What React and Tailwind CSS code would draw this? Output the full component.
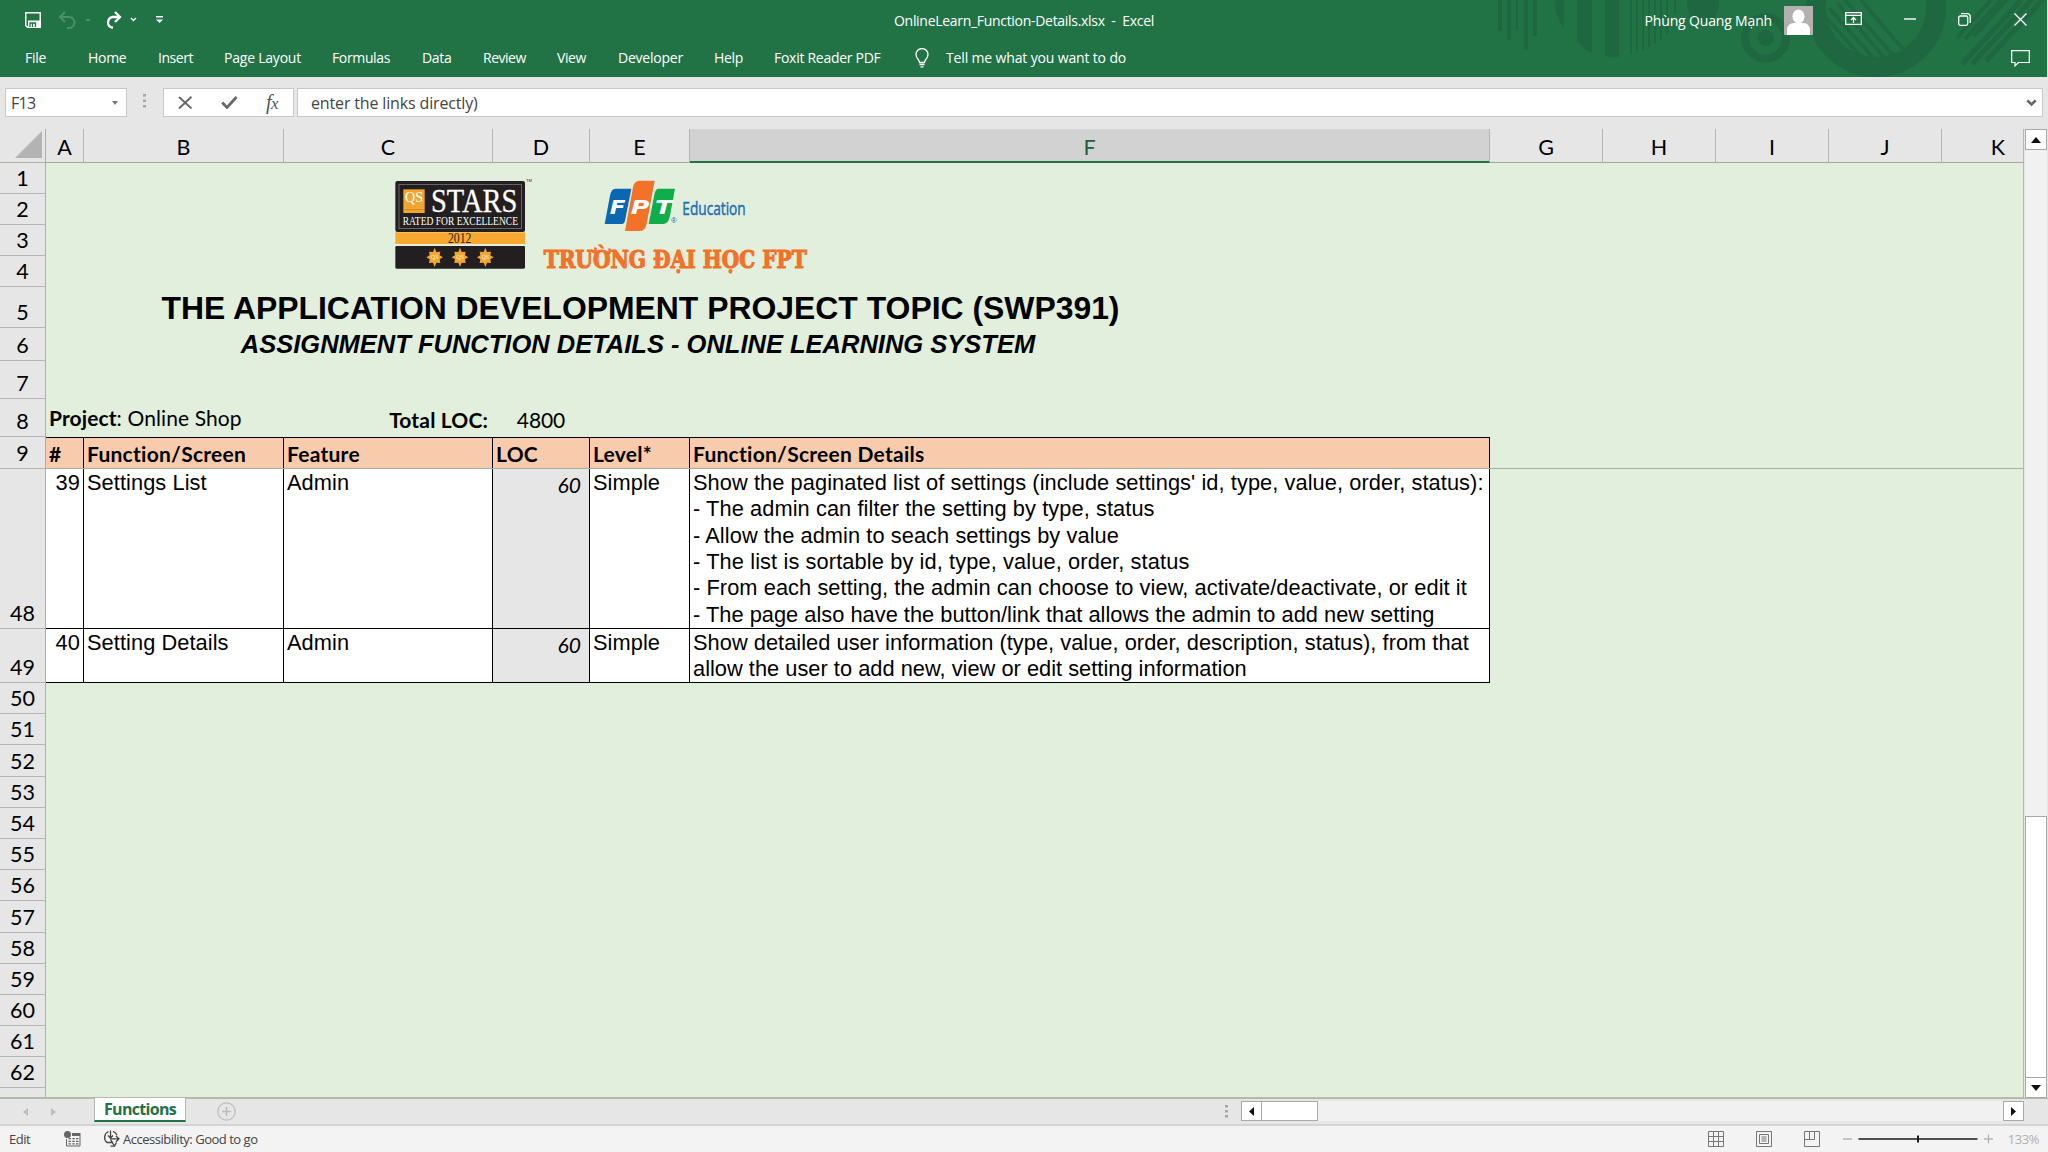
import React from "react";

const UI = "font-['Open_Sans','Noto_Sans',sans-serif]";
const CALIBRI = "font-['Lato','Noto_Sans',sans-serif]";
const ARIAL = "font-['Liberation_Sans',Arial,sans-serif]";

const TABS = [
  ["File", "w-[63px] tracking-[-0.29px]"],
  ["Home", "w-[70px] tracking-[-0.3px]"],
  ["Insert", "w-[66px] tracking-[-0.45px]"],
  ["Page Layout", "w-[108px] tracking-[-0.22px]"],
  ["Formulas", "w-[90px] tracking-[-0.36px]"],
  ["Data", "w-[61px] tracking-[-0.3px]"],
  ["Review", "w-[74px] tracking-[-0.5px]"],
  ["View", "w-[61px] tracking-[-0.4px]"],
  ["Developer", "w-[96px] tracking-[-0.22px]"],
  ["Help", "w-[60px] tracking-[-0.3px]"],
  ["Foxit Reader PDF", "w-[139px] tracking-[-0.28px]"],
];

const COLUMNS = [
  ["A", "w-[38px]"],
  ["B", "w-[200px]"],
  ["C", "w-[209px]"],
  ["D", "w-[97px]"],
  ["E", "w-[100px]"],
  ["F", "w-[800px]"],
  ["G", "w-[113px]"],
  ["H", "w-[113px]"],
  ["I", "w-[113px]"],
  ["J", "w-[113px]"],
];

const ROWS = [
  ["1", "h-[31px]"], ["2", "h-[31px]"], ["3", "h-[31px]"], ["4", "h-[31px]"],
  ["5", "h-[41px]"], ["6", "h-[33px]"], ["7", "h-[38px]"], ["8", "h-[38px]"],
  ["9", "h-[32px]"], ["48", "h-[160px]"], ["49", "h-[54px]"],
];
const LOWER_ROWS = ["50", "51", "52", "53", "54", "55", "56", "57", "58", "59", "60", "61", "62"];

const HEADINGS = [
  ["#", "w-[38px]"],
  ["Function/Screen", "w-[200px]"],
  ["Feature", "w-[209px]"],
  ["LOC", "w-[97px]"],
  ["Level*", "w-[100px]"],
  ["Function/Screen Details", "w-[800px]"],
];

const RECORDS = [
  {
    id: "39", name: "Settings List", height: "h-[160px]",
    lines: [
      ["Show the paginated list of settings (include settings' id, type, value, order, status):", "tracking-[0.07px]"],
      ["- The admin can filter the setting by type, status", "tracking-[0.08px]"],
      ["- Allow the admin to seach settings by value", "tracking-[0.07px]"],
      ["- The list is sortable by id, type, value, order, status", "tracking-[0.11px]"],
      ["- From each setting, the admin can choose to view, activate/deactivate, or edit it", "tracking-[0.07px]"],
      ["- The page also have the button/link that allows the admin to add new setting", "tracking-[0.02px]"],
    ],
  },
  {
    id: "40", name: "Setting Details", height: "h-[54px]",
    lines: [
      ["Show detailed user information (type, value, order, description, status), from that", "tracking-[0.035px]"],
      ["allow the user to add new, view or edit setting information", "tracking-[0.02px]"],
    ],
  },
];

function TitlePattern() {
  return (
    <svg className="absolute right-0 top-0" width="558" height="77" viewBox="1490 0 558 77" fill="#1f6740" stroke="none">
      <path d="M1499 0h4v31h-4zM1508 0h4v40h-4zM1517 0h2v30h-2zM1525 0h4v50h-4zM1534 0h4v36h-4zM1555 0h10v28q-8-10-10-28z" />
      <path d="M1578 0h15v53q-9-4-15-12zM1606 0h14v57q-8 1-14-1z" />
      <path d="M1631 0h2v53h-2zM1637 0h2v53h-2zM1643 0h2v50h-2zM1649 0h2v47h-2zM1655 0h2v43h-2zM1661 0h2v39h-2zM1667 0h2v34h-2zM1675 0h2v14h-2z" />
      <path d="M1688 0h32q0 22-16 22t-16-22z" />
      <circle cx="1766.500" cy="38" r="8" />
      <circle cx="1766.500" cy="38" r="20.500" fill="none" stroke="#1f6740" strokeWidth="8" />
      <circle cx="1877" cy="7" r="60" fill="none" stroke="#1f6740" strokeWidth="20" />
      <g stroke="#1f6740" strokeWidth="3.500">
        <path d="M1824 14L1872 68M1830 8L1884 69M1838 3L1892 65M1846 0L1900 62M1862 0L1908 54" />
        <path d="M1963 64L2022 0M1973 64L2036 -4M1987 61L2046 -3" strokeWidth="5" />
        <path d="M1958 38L1992 0M1966 39L2002 0M1975 36L2010 -3" strokeWidth="4" />
      </g>
    </svg>
  );
}

function TitleBar() {
  return (
    <div className="relative flex h-[40px] items-center text-[14px] leading-[20px] text-white">
      <div className="flex w-[340px] items-center pl-[25px]">
        <svg width="16" height="16" viewBox="0 0 16 16" fill="none" stroke="white" strokeWidth="1.5">
          <path d="M.75.75h14.500v14.500H2.500L.75 13.500z" />
          <path d="M1 8.500h14v7H3v-7z" fill="white" stroke="none" opacity=".95" />
          <path d="M5 15v-4h5.500v4M7.500 11v4" stroke="#217346" strokeWidth="1.3" />
        </svg>
        <svg className="ml-[17px]" width="34" height="20" viewBox="0 0 34 20" fill="none" stroke="#4c9069" strokeWidth="2">
          <path d="M7 2L2 7l5 5M2.500 7H11a5.500 5.500 0 0 1 0 11H9" />
          <path d="M27 9h6l-3 3z" fill="#4c9069" stroke="none" />
        </svg>
        <svg className="ml-[12px]" width="34" height="20" viewBox="0 0 34 20" fill="none" stroke="white" strokeWidth="2.300">
          <path d="M11 2l5 5-5 5M16 7H8.500a5.500 5.500 0 0 0-1 10.500H9" />
          <path d="M27 8l2.500 2.500L32 8" strokeWidth="1.4" />
        </svg>
        <svg className="ml-[18px]" width="7" height="8" viewBox="0 0 7 8" fill="white">
          <path d="M0 0h7v1.500H0zM0 3.500h7L3.500 7z" />
        </svg>
      </div>
      <div className="flex-1 whitespace-pre pl-[554px] pt-[1px] tracking-[-0.3px]">OnlineLearn_Function-Details.xlsx  -  Excel</div>
      <div className="flex h-[40px] items-center">
        <span className="pt-[1px] tracking-[-0.16px]">Phùng Quang Mạnh</span>
        <svg className="ml-[12px]" width="29" height="29" viewBox="0 0 29 29">
          <path d="M0 0h29v29H0z" fill="#b3b0b0" />
          <ellipse cx="14.500" cy="10.500" rx="6" ry="7" fill="white" />
          <path d="M3 29v-4q0-8 7-8h9q7 0 7 8v4z" fill="white" />
        </svg>
        <svg className="mb-[3px] ml-[32px]" width="17" height="13" viewBox="0 0 17 13" fill="none" stroke="white" strokeWidth="1.300">
          <path d="M.7.7h15.600v11.600H.7zM.7 3.300h15.600M8.500 11V5.500M6 8l2.500-2.500L11 8" />
        </svg>
        <svg className="mb-[3px] ml-[42px]" width="12" height="2" viewBox="0 0 12 2"><path d="M0 .3h12v1.400H0z" fill="white" /></svg>
        <svg className="mb-[2px] ml-[42px]" width="13" height="13" viewBox="0 0 13 13" fill="none" stroke="white" strokeWidth="1.300">
          <rect x=".7" y="3" width="9" height="9.300" rx="1.500" />
          <path d="M3 .7h6.500a2.700 2.700 0 0 1 2.700 2.700V10" />
        </svg>
        <svg className="mb-[2px] ml-[43px] mr-[20px]" width="13" height="13" viewBox="0 0 13 13" stroke="white" strokeWidth="1.400">
          <path d="M.5.5l12 12M12.500.5l-12 12" />
        </svg>
      </div>
    </div>
  );
}

function Ribbon() {
  return (
    <div className="relative flex h-[36px] items-center pl-[25px] text-[14px] leading-[20px] text-white">
      {TABS.map(([label, cls]) => (
        <div key={label} className={`${cls} shrink-0 whitespace-nowrap`}>{label}</div>
      ))}
      <svg width="18" height="20" viewBox="0 0 18 20" fill="none" stroke="white" strokeWidth="1.300">
        <path d="M6.500 14.500c0-3-3.500-4-3.500-8a6 6 0 0 1 12 0c0 4-3.500 5-3.500 8zM6.500 16.500h5M7.500 18.800h3" />
      </svg>
      <div className="ml-[15px] flex-1 tracking-[-0.15px]">Tell me what you want to do</div>
      <svg className="mr-[17px] mt-[1px]" width="19" height="17" viewBox="0 0 19 17" fill="none" stroke="white" strokeWidth="1.200">
        <path d="M.7.7h17.600v11.800H7.500L4 15.800v-3.300H.7z" />
      </svg>
    </div>
  );
}

function FormulaBar() {
  const box = "flex h-[29px] items-center border border-[#c8c8c8] bg-white";
  return (
    <div className="flex h-[52px] items-start pl-[5px] pr-[5px] pt-[11px] text-[16px] leading-[20px] text-[#444]">
      <div className={`${box} w-[122px] justify-between pl-[5px] pr-[8px]`}>
        <span className="tracking-[-0.68px]">F13</span>
        <svg width="6" height="4" viewBox="0 0 6 4" fill="#777"><path d="M0 0h6L3 4z" /></svg>
      </div>
      <svg className="ml-[16px] mt-[6px]" width="3" height="14" viewBox="0 0 3 14" fill="#a6a6a6">
        <path d="M0 0h3v2.500H0zM0 5.500h3V8H0zM0 11h3v2.500H0z" />
      </svg>
      <div className={`${box} ml-[17px] w-[131px] pl-[14px]`}>
        <svg width="15" height="13" viewBox="0 0 15 13" fill="none" stroke="#6a6a6a" strokeWidth="1.900"><path d="M1 1l12.500 11.500M13.500.7L1 12.500" /></svg>
        <svg className="ml-[28px]" width="17" height="13" viewBox="0 0 17 13" fill="none" stroke="#6a6a6a" strokeWidth="2.800"><path d="M1.200 6.500L6 11.500 15.500 1" /></svg>
        <span className="ml-[28px] font-['Liberation_Serif',serif] text-[20px] italic tracking-[-0.5px] text-[#555]">f<span className="text-[17px]">x</span></span>
      </div>
      <div className={`${box} ml-[3px] flex-1 justify-between pl-[13px] pr-[5px]`}>
        <span className="tracking-[-0.15px]">enter the links directly)</span>
        <svg width="11" height="8" viewBox="0 0 11 8" fill="none" stroke="#666" strokeWidth="2.600"><path d="M1.300 1.300l4.200 4.200 4.200-4.200" /></svg>
      </div>
    </div>
  );
}

function ColumnHeaders() {
  return (
    <div className={`flex h-[34px] text-[21.5px] leading-[30px] text-black ${CALIBRI}`}>
      <div className="flex w-[46px] shrink-0 items-end justify-end border-b border-r border-[#a9b0a5] pb-[4px] pr-[3px]">
        <svg width="27" height="27" viewBox="0 0 27 27" fill="#b3b3b3"><path d="M27 0v27H0z" /></svg>
      </div>
      {COLUMNS.map(([name, w]) => (
        <div
          key={name}
          className={`${w} flex shrink-0 justify-center border-r border-[#b4b4b4] pt-[3px] ${
            name === "F" ? "border-b-2 border-b-[#217346] bg-[#d2d2d2] text-[#1f5f3c]" : "border-b border-b-[#a3a89f]"
          }`}
        >
          {name}
        </div>
      ))}
      <div className="flex flex-1 justify-end border-b border-b-[#a3a89f] pr-[18px] pt-[3px]">K</div>
    </div>
  );
}

function RowHeaders() {
  const cell = "flex shrink-0 items-end justify-center border-b border-[#b4b4b4] leading-[30px]";
  return (
    <div className={`flex w-[46px] shrink-0 flex-col overflow-hidden border-r border-[#a9b0a5] text-[21.5px] text-black ${CALIBRI}`}>
      {ROWS.map(([n, h]) => <div key={n} className={`${cell} ${h}`}>{n}</div>)}
      {LOWER_ROWS.map((n) => <div key={n} className={`${cell} h-[31.2px]`}>{n}</div>)}
      <div className={`${cell} h-[31.2px]`}>63</div>
    </div>
  );
}

function Logos() {
  return (
    <svg className="absolute left-[334px] top-[2px] overflow-visible" width="440" height="130" viewBox="0 0 1320 390">
      <rect x="46" y="48" width="389" height="153" rx="6" fill="#231f20" />
      <rect x="57" y="58" width="367" height="133" fill="none" stroke="#8b8788" strokeWidth="2" />
      <rect x="70" y="73" width="64" height="71" fill="#f0a62f" />
      <text x="102" y="111" textAnchor="middle" textLength="54" lengthAdjust="spacingAndGlyphs" fontFamily="Liberation Serif, serif" fontSize="46" fill="#fff">QS</text>
      <path d="M74 134h56" stroke="#c98a25" strokeWidth="3" />
      <text x="153" y="141" textLength="259" lengthAdjust="spacingAndGlyphs" fontFamily="Liberation Serif, serif" fontSize="102" fill="#fff" stroke="#fff">STARS</text>
      <text x="68" y="180" textLength="346" lengthAdjust="spacingAndGlyphs" fontFamily="Liberation Serif, serif" fontSize="35" fill="#fff">RATED FOR EXCELLENCE</text>
      <text x="438" y="50" fontFamily="Liberation Sans, sans-serif" fontSize="12" fill="#231f20">TM</text>
      <rect x="46" y="202" width="389" height="35" fill="#f9a92f" />
      <text x="204" y="234" textLength="70" lengthAdjust="spacingAndGlyphs" fontFamily="Liberation Serif, serif" fontSize="45" fill="#231f20">2012</text>
      <rect x="46" y="243" width="389" height="68" rx="4" fill="#231f20" />
      {[164, 240, 316].map((x) => (
        <g key={x} transform={`translate(${x} 277)`}>
          <path d="M0-29L5-16 17-17 15-6 25 0 15 6 17 17 5 16 0 29-5 16-17 17-15 6-25 0-15-6-17-17-5-16z" fill="#f0a62f" />
          <text x="0" y="6" textAnchor="middle" fontFamily="Liberation Serif, serif" fontSize="18" fill="#fff3d6">QS</text>
        </g>
      ))}
      <path d="M706 71h48l-19 96q-2 10-12 10h-49l16-85q4-21 16-21z" fill="#0b67b2" />
      <path d="M836 71h49l-16 85q-4 21-20 21h-43l18-92q3-14 12-14z" fill="#0fae4b" />
      <path d="M778 47h46l-24 129q-4 22-22 22h-43l24-131q4-20 19-20z" fill="#f37129" />
      <g fill="#fff" fontFamily="DejaVu Sans, sans-serif" fontWeight="700" fontStyle="italic" fontSize="56">
        <text x="689" y="146" textLength="47" lengthAdjust="spacingAndGlyphs">F</text>
        <text x="752" y="146" textLength="56" lengthAdjust="spacingAndGlyphs">P</text>
        <text x="825" y="146" textLength="52" lengthAdjust="spacingAndGlyphs">T</text>
      </g>
      <text x="873" y="174" fontFamily="Liberation Sans, sans-serif" fontSize="23" fill="#0b67b2">®</text>
      <text x="907" y="149" textLength="190" lengthAdjust="spacingAndGlyphs" fontFamily="Open Sans, sans-serif" fontSize="55" fill="#1c6fb5" stroke="#1c6fb5" strokeWidth="1.500">Education</text>
      <text x="491" y="309" textLength="789" lengthAdjust="spacingAndGlyphs" fontFamily="DejaVu Serif, serif" fontWeight="700" fontSize="73" fill="#f37129" stroke="#f37129" strokeWidth="3.500">TRƯỜNG ĐẠI HỌC FPT</text>
    </svg>
  );
}

function Sheet() {
  const edge = "border-r border-black shrink-0";
  return (
    <div className="relative flex min-w-0 flex-1 flex-col bg-[#e2efdc] text-black">
      <Logos />
      <div className={`flex h-[236px] w-[1189px] flex-col items-center pt-[125px] font-bold ${ARIAL}`}>
        <div className="whitespace-nowrap text-[31.9px] leading-[40px]">THE APPLICATION DEVELOPMENT PROJECT TOPIC (SWP391)</div>
        <div className="whitespace-nowrap pr-[5px] text-[25.5px] italic leading-[32px]">ASSIGNMENT FUNCTION DETAILS - ONLINE LEARNING SYSTEM</div>
      </div>
      <div className={`flex h-[38px] text-[21px] leading-[34px] ${CALIBRI}`}>
        <div className="w-[297px] pl-[3px] pt-[2px] tracking-[0.1px]"><b>Project</b>: Online Shop</div>
        <div className="w-[149px] pr-[4px] pt-[4px] text-right font-bold tracking-[0.15px]">Total LOC:</div>
        <div className="w-[98px] pt-[4px] text-center tracking-[-0.1px]">4800</div>
      </div>
      <div className="flex border-b border-[#a3b09c]">
        <div className={`flex h-[31px] border-t border-black bg-[#f8cbad] text-[21px] font-bold leading-[31px] tracking-[0.26px] ${CALIBRI}`}>
          {HEADINGS.map(([t, w]) => <div key={t} className={`${w} pl-[3px] ${edge}`}>{t}</div>)}
        </div>
      </div>
      <div className={`flex w-[1444px] flex-col bg-white text-[21.8px] leading-[26.33px] tracking-[0.07px] ${ARIAL}`}>
        {RECORDS.map((r) => (
          <div key={r.id} className={`flex ${r.height} border-b border-black`}>
            <div className={`w-[38px] pr-[3px] pt-[1px] text-right ${edge}`}>{r.id}</div>
            <div className={`w-[200px] pl-[3px] pt-[1px] ${edge}`}>{r.name}</div>
            <div className={`w-[209px] pl-[3px] pt-[1px] ${edge}`}>Admin</div>
            <div className={`w-[97px] bg-[#e6e6e6] pr-[8px] pt-[3px] text-right text-[21px] italic ${CALIBRI} ${edge}`}>60</div>
            <div className={`w-[100px] pl-[3px] pt-[1px] ${edge}`}>Simple</div>
            <div className={`w-[800px] pl-[3px] pt-[1px] ${edge}`}>
              {r.lines.map(([text, tracking]) => <div key={text} className={`whitespace-nowrap ${tracking}`}>{text}</div>)}
            </div>
          </div>
        ))}
      </div>
    </div>
  );
}

function VerticalScrollbar() {
  return (
    <div className="flex w-[22px] shrink-0 flex-col bg-[#f1f1f1]">
      <div className="flex h-[21px] items-center justify-center border border-[#a9a9a9] bg-white">
        <svg width="10" height="6" viewBox="0 0 10 6"><path d="M5 0l5 6H0z" fill="#111" /></svg>
      </div>
      <div className="flex-1" />
      <div className="h-[262px] border border-[#a9a9a9] bg-white" />
      <div className="flex h-[20px] items-center justify-center border border-t-0 border-[#a9a9a9] bg-white">
        <svg width="10" height="6" viewBox="0 0 10 6"><path d="M5 6l5-6H0z" fill="#111" /></svg>
      </div>
    </div>
  );
}

function SheetTabs() {
  return (
    <div className="flex h-[28px] items-start border-b-2 border-[#d4d4d4] bg-[#e6e6e6]">
      <div className="flex h-[26px] w-[94px] items-center border-t border-[#b3baa9] pl-[23px]">
        <svg width="34" height="10" viewBox="0 0 34 10" fill="#bdbdbd"><path d="M5 1v8L0 5zM28 1v8l5-4z" /></svg>
      </div>
      <div className="flex h-[24px] w-[92px] items-center justify-center border-x border-b-2 border-x-[#b4b4b4] border-b-[#217346] bg-white text-[16px] font-bold leading-[20px] tracking-[-0.69px] text-[#217346]">
        Functions
      </div>
      <div className="flex h-[26px] flex-1 items-center border-t border-[#b3baa9] pl-[31px]">
        <svg width="19" height="19" viewBox="0 0 19 19" fill="none" stroke="#bcbcbc" strokeWidth="1.200">
          <circle cx="9.500" cy="9.500" r="8.700" /><path d="M5 9.500h9M9.500 5v9" strokeWidth="1.500" />
        </svg>
      </div>
      <div className="flex h-[25px] w-[823px] items-center border-t border-[#b3baa9]">
        <svg width="3" height="13" viewBox="0 0 3 13" fill="#a6a6a6"><path d="M0 0h3v2.500H0zM0 5h3v2.500H0zM0 10h3v2.500H0z" /></svg>
        <div className="ml-[13px] flex h-[20px] w-[783px] bg-[#f1f1f1]">
          <div className="flex w-[21px] items-center justify-center border border-[#a9a9a9] bg-white">
            <svg width="5" height="9" viewBox="0 0 5 9"><path d="M5 0v9L0 4.500z" fill="#111" /></svg>
          </div>
          <div className="w-[56px] border border-l-0 border-[#a9a9a9] bg-white" />
          <div className="flex-1" />
          <div className="flex w-[21px] items-center justify-center border border-[#a9a9a9] bg-white">
            <svg width="5" height="9" viewBox="0 0 5 9"><path d="M0 0v9l5-4.500z" fill="#111" /></svg>
          </div>
        </div>
      </div>
    </div>
  );
}

function StatusBar() {
  return (
    <div className="flex h-[26px] items-center bg-[#f3f3f3] pb-[1px] pl-[9px] text-[13px] leading-[18px] text-[#444]">
      <span className="w-[55px] tracking-[-0.5px]">Edit</span>
      <svg width="17" height="16" viewBox="0 0 17 16" fill="#666">
        <circle cx="3.500" cy="3.500" r="3.500" /><path d="M8 2h8.500v3H8z" />
        <path d="M2.500 8v7h13.500V5" fill="none" stroke="#666" strokeWidth="1" />
        <path d="M4.500 7h2.500v1.300H4.500zM8.300 7h2.500v1.300H8.300zM12 7h2.500v1.300H12zM4.500 9.700h2.500V11H4.500zM8.300 9.700h2.500V11H8.300zM12 9.700h2.500V11H12zM4.500 12.300h2.500v1.300H4.500zM8.300 12.300h2.500v1.300H8.300zM12 12.300h2.500v1.300H12z" />
      </svg>
      <svg className="ml-[22px]" width="17" height="17" viewBox="0 0 17 17" fill="none" stroke="#444" strokeWidth="1.300">
        <path d="M5.500 1.500A6.500 6.500 0 0 0 4 12.500l6 0M10 1.300a6.500 6.500 0 0 1 4 4" />
        <path d="M7.500.500v7.500M5 5.500L7.500 8 10 5.500M7.500 8.800h8.300M13 6l3 2.800-3 2.900M7.500 9.500l4 6.500M7.500 16.200l4-.2 2-3.500" />
      </svg>
      <span className="ml-[3px] flex-1 tracking-[-0.48px]">Accessibility: Good to go</span>
      <div className="flex items-center text-[#777]">
        <svg width="16" height="16" viewBox="0 0 16 16" fill="none" stroke="#777"><path d="M.5.5h15v15H.5zM.5 5.500h15M.5 10.500h15M5.500.5v15M10.500.5v15" /></svg>
        <svg className="ml-[32px]" width="16" height="16" viewBox="0 0 16 16" fill="none" stroke="#777"><path d="M.5.5h15v15H.5zM3.500 3.500h9v9h-9zM5.500 6h5M5.500 8h5M5.500 10h5" /></svg>
        <svg className="ml-[32px]" width="16" height="16" viewBox="0 0 16 16" fill="none" stroke="#777"><path d="M.5.5h15v15H.5zM.5 8.500h10V.5M5.500.5v8" /></svg>
        <svg className="ml-[23px]" width="150" height="12" viewBox="0 0 150 12" fill="none">
          <path d="M0 6h9M141 6h10M145.500 1.500v9" stroke="#b5b5b5" strokeWidth="1.300" />
          <path d="M15.500 6h119" stroke="#1a1a1a" strokeWidth="1.300" />
          <path d="M75 2.500v7" stroke="#1a1a1a" strokeWidth="2" />
        </svg>
        <span className="ml-[15px] mr-[9px] tracking-[-0.45px] text-[#b0b0b0]">133%</span>
      </div>
    </div>
  );
}

export default function App() {
  return (
    <div className={`flex h-[1152px] w-[2048px] flex-col overflow-hidden bg-[#e6e6e6] ${UI}`}>
      <div className="relative h-[77px] shrink-0 border-r border-r-[#e6e6e6] bg-[#217346]">
        <TitlePattern />
        <TitleBar />
        <Ribbon />
      </div>
      <FormulaBar />
      <div className="flex h-[969px] shrink-0 pr-[1px]">
        <div className="flex w-[2024px] flex-col border-r border-b border-[#b3baa9]">
          <ColumnHeaders />
          <div className="flex min-h-0 flex-1">
            <RowHeaders />
            <Sheet />
          </div>
        </div>
        <div className="w-[1px]" />
        <VerticalScrollbar />
      </div>
      <SheetTabs />
      <StatusBar />
    </div>
  );
}
